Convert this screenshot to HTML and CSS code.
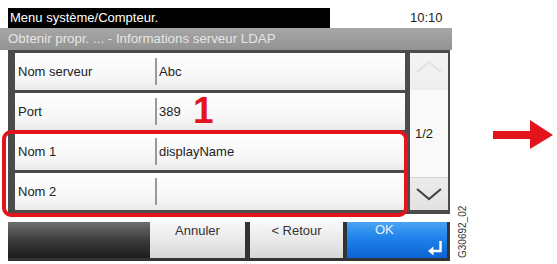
FILE: index.html
```html
<!DOCTYPE html>
<html lang="fr">
<head>
<meta charset="utf-8">
<title>Informations serveur LDAP</title>
<link rel="stylesheet" href="styles.css">
</head>
<body>
<div class="page">
  <div class="top">
    <div class="title">Menu système/Compteur.</div>
    <div class="clock">10:10</div>
  </div>
  <div class="sub">Obtenir propr. ... - Informations serveur LDAP</div>
  <div class="main">
    <div class="list">
      <div class="row"><div class="label">Nom serveur</div><div class="val">Abc</div></div>
      <div class="row"><div class="label">Port</div><div class="val">389</div></div>
      <div class="row"><div class="label">Nom 1</div><div class="val">displayName</div></div>
      <div class="row"><div class="label">Nom 2</div><div class="val"></div></div>
    </div>
    <div class="scroll">
      <div class="scol">
        <div class="sup">
          <svg width="38" height="37" viewBox="0 0 38 37"><polyline points="7,19 19,9 31,19" fill="none" stroke="#e2e2e2" stroke-width="2"/></svg>
        </div>
        <div class="smid">1/2</div>
        <div class="sdown">
          <svg width="38" height="32" viewBox="0 0 38 32"><polyline points="7,11 19,21 31,11" fill="none" stroke="#454545" stroke-width="2.2"/></svg>
        </div>
      </div>
    </div>
  </div>
  <div class="bar">
    <div class="darkseg"></div>
    <div class="btn b-cancel">Annuler</div>
    <div class="btn b-back">&lt; Retour</div>
    <div class="btn-ok">
      <span class="oktext">OK</span>
      <svg class="enter" width="17" height="16" viewBox="0 0 17 16"><path d="M13.5 1 V11 H5" fill="none" stroke="#fff" stroke-width="2.4"/><polygon points="1,11 6.5,6.5 6.5,15.5" fill="#fff"/></svg>
    </div>
  </div>

  <div class="redbox"></div>
  <div class="num">1</div>
  <svg class="arrow" width="66" height="34" viewBox="0 0 66 34"><polygon points="3,13 40,13 40,2 63,17 40,31 40,21 3,21" fill="#e3141c"/></svg>
  <div class="code">G30692_02</div>
</div>
</body>
</html>
```
FILE: styles.css
```css
html, body {
  margin: 0;
  padding: 0;
  background: #fff;
}
.page {
  position: relative;
  width: 557px;
  height: 264px;
  overflow: hidden;
  background: #fff;
  font-family: "Liberation Sans", Arial, sans-serif;
  font-size: 13px;
  color: #222;
}
.top {
  display: flex;
  height: 28px;
  padding-top: 8px;
  box-sizing: border-box;
}
.title {
  margin-left: 8px;
  width: 322px;
  height: 20px;
  background: #000;
  color: #fff;
  line-height: 20px;
  padding-left: 2px;
  box-sizing: border-box;
}
.clock {
  margin-left: 80px;
  line-height: 20px;
  color: #222;
}
.sub {
  width: 452px;
  height: 22px;
  background: linear-gradient(#a6a6a6, #939393);
  color: #e6e6e6;
  padding-left: 8px;
  box-sizing: border-box;
  line-height: 22px;
  font-size: 13.3px;
}
.main {
  display: flex;
  margin-left: 8px;
  width: 442px;
  height: 164px;
  background: #4b4b4b;
}
.list {
  width: 397px;
  padding: 3px 0 0 7px;
  box-sizing: border-box;
  display: flex;
  flex-direction: column;
  gap: 3px;
}
.row {
  height: 37px;
  display: flex;
  background: linear-gradient(#ffffff, #f6f6f6 70%, #e9e9e9);
}
.label {
  width: 140px;
  padding-left: 3px;
  box-sizing: border-box;
  line-height: 37px;
}
.val {
  margin: 5px 0;
  border-left: 2px solid #9a9a9a;
  padding-left: 2px;
  line-height: 27px;
}
.scroll {
  width: 45px;
  padding: 3px 2px 4px 5px;
  box-sizing: border-box;
}
.scol {
  height: 100%;
  display: flex;
  flex-direction: column;
  background: #f9f9f9;
}
.sup {
  height: 37px;
  background: linear-gradient(#f4f4f4, #eeeeee);
}
.sup svg, .sdown svg {
  display: block;
}
.smid {
  flex: 1;
  padding: 36px 0 0 5px;
  line-height: 16px;
  font-size: 13px;
}
.sdown {
  height: 33px;
  background: linear-gradient(#ececec, #e2e2e2);
  border-top: 1px solid #d4d4d4;
  box-sizing: border-box;
}
.bar {
  display: flex;
  margin: 8px 0 0 8px;
  width: 442px;
  height: 39px;
  background: #333;
}
.darkseg {
  width: 142px;
  height: 36px;
  background: linear-gradient(#6e6e6e, #3c3c3c 50%, #1c1c1c);
}
.btn {
  height: 36px;
  background: linear-gradient(#f8f8f8, #e6e6e6 60%, #d6d6d6);
  text-align: center;
  line-height: 16px;
  padding-top: 1px;
  box-sizing: border-box;
  color: #333;
}
.b-cancel {
  width: 95px;
}
.b-back {
  width: 93px;
  margin-left: 5px;
}
.btn-ok {
  position: relative;
  width: 100px;
  height: 36px;
  margin-left: 4px;
  background: linear-gradient(#4aa3f4, #1f82ea 45%, #0c63d2);
  color: #e8f2ff;
  box-sizing: border-box;
  padding: 1px 0 0 28px;
  line-height: 14px;
}
.enter {
  position: absolute;
  right: 3px;
  bottom: 2px;
}
.redbox {
  position: absolute;
  left: 2px;
  top: 130px;
  width: 406px;
  height: 87px;
  border: 4px solid #e3141c;
  border-radius: 9px;
  box-sizing: border-box;
}
.num {
  position: absolute;
  left: 193px;
  top: 92px;
  font-size: 37px;
  line-height: 1;
  font-weight: bold;
  color: #e3141c;
}
.arrow {
  position: absolute;
  left: 490px;
  top: 118px;
}
.code {
  position: absolute;
  left: 437px;
  top: 226px;
  width: 52px;
  line-height: 12px;
  font-size: 10px;
  color: #333;
  text-align: center;
  transform: rotate(-90deg);
  transform-origin: center;
}
```
